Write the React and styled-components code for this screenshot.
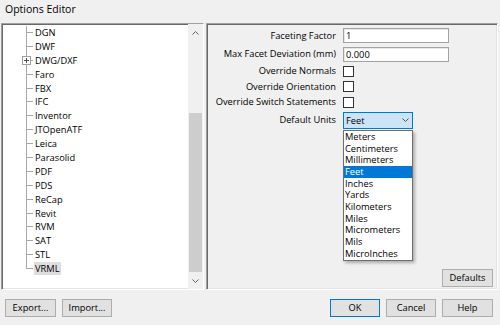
import React from 'react';
import styled, { createGlobalStyle } from 'styled-components';

const GlobalStyle = createGlobalStyle`
  html, body { margin: 0; padding: 0; background: #f0f0f0; }
  body {
    font-family: "Open Sans", "Noto Sans", "DejaVu Sans", sans-serif;
    font-size: 9.3px;
    color: #000;
  }
  * { box-sizing: border-box; }
`;

const Dialog = styled.div`
  width: 500px;
  height: 325px;
  display: flex;
  flex-direction: column;
  background: #f0f0f0;
  overflow: hidden;
`;

const TitleBar = styled.div`
  height: 23px;
  padding: 2px 0 0 5px;
  font-size: 10.5px;
  line-height: 14px;
`;

const Main = styled.div`
  height: 267px;
  display: flex;
  gap: 2px;
  padding-left: 1px;
`;

const Sunken = styled.div`
  border: 1px solid;
  border-color: #a0a0a0 #ffffff #ffffff #a0a0a0;
  box-shadow: inset 1px 1px 0 #696969, inset -1px -1px 0 #e3e3e3;
`;

const TreePanel = styled(Sunken)`
  width: 203px;
  background: #fff;
  display: flex;
`;

const TreeList = styled.div`
  flex: 1;
  padding-top: 1.5px;
  display: flex;
  flex-direction: column;
`;

const TreeRow = styled.div`
  height: 13.9px;
  display: flex;
  align-items: stretch;
`;

const Guide = styled.div`
  width: 7px;
  margin-left: 24px;
  flex-shrink: 0;
  position: relative;
  background:
    linear-gradient(#a8a8a8, #a8a8a8) no-repeat 0 0 / 1px ${(p) => (p.$last ? '50%' : '100%')},
    linear-gradient(#a8a8a8, #a8a8a8) no-repeat 0 50% / 100% 1px;
`;

const ExpandBox = styled.span`
  position: absolute;
  left: -4px;
  top: 50%;
  margin-top: -4px;
  width: 9px;
  height: 9px;
  border: 1px solid #a0a0a0;
  background: #fff;
  display: flex;
  align-items: center;
  justify-content: center;
`;

const Label = styled.span`
  margin-left: 1px;
  padding: 0 1px;
  line-height: 13px;
  align-self: center;
  background: ${(p) => (p.$selected ? '#dedede' : 'transparent')};
`;

const ScrollBar = styled.div`
  width: 15px;
  background: #f0f0f0;
  display: flex;
  flex-direction: column;
`;

const ScrollArrow = styled.div`
  height: 17px;
  display: flex;
  align-items: center;
  justify-content: center;
  padding-right: 1px;
`;

const ScrollTrack = styled.div`
  flex: 1;
  display: flex;
  flex-direction: column;
  padding: 0 1px 0 1px;
`;

const Thumb = styled.div`
  margin-top: ${(p) => p.$offset}px;
  height: ${(p) => p.$size}px;
  background: #cdcdcd;
`;

const RightPanel = styled(Sunken)`
  flex: 1;
  margin-right: 2px;
  display: flex;
  flex-direction: column;
  padding-top: 4px;
`;

const Form = styled.div`
  display: grid;
  grid-template-columns: 129px 1fr;
  grid-template-rows: 15px 15px 12px 12px 12px 17px;
  column-gap: 7px;
  row-gap: 3.6px;
  align-items: center;
`;

const FieldLabel = styled.div`
  text-align: right;
  white-space: nowrap;
  line-height: 12px;
`;

const TextInput = styled.div`
  width: 106px;
  height: 15px;
  background: #fff;
  border: 1px solid #a3a3a3;
  box-shadow: inset 1px 1px 0 #e8e8e8;
  padding-left: 2px;
  line-height: 13px;
`;

const CheckBox = styled.div`
  width: 11px;
  height: 11px;
  background: #fff;
  border: 1px solid #333;
`;

const ComboWrap = styled.div`
  position: relative;
  width: 70px;
  height: 17px;
`;

const Combo = styled.div`
  width: 70px;
  height: 17px;
  background: #cce4f7;
  border: 1px solid #0078d7;
  display: flex;
  align-items: center;
  justify-content: space-between;
  padding: 0 3px 0 2px;
  line-height: 15px;
`;

const DropList = styled.div`
  position: absolute;
  top: 18px;
  left: 0;
  width: 70px;
  background: #fff;
  border: 1px solid #6f6f6f;
  box-shadow: 2px 2px 3px rgba(0, 0, 0, 0.28);
  z-index: 2;
`;

const DropItem = styled.div`
  height: 11.7px;
  line-height: 11.7px;
  padding-left: 1px;
  white-space: nowrap;
  background: ${(p) => (p.$active ? '#0078d7' : 'transparent')};
  color: ${(p) => (p.$active ? '#fff' : '#000')};
`;

const PanelFooter = styled.div`
  margin-top: auto;
  display: flex;
  justify-content: flex-end;
  padding: 0 4px 2px 0;
`;

const Button = styled.div`
  width: ${(p) => p.$w || 50}px;
  height: 18px;
  background: #e1e1e1;
  border: 1px solid ${(p) => (p.$default ? '#0078d7' : '#adadad')};
  display: flex;
  align-items: center;
  justify-content: center;
  line-height: 16px;
`;

const Footer = styled.div`
  flex: 1;
  display: flex;
  align-items: flex-start;
  padding: 9px 7px 0 5px;
`;

const ButtonGroup = styled.div`
  display: flex;
  gap: ${(p) => p.$gap || 6}px;
`;

const Spacer = styled.div`
  flex: 1;
`;

const Chevron = ({ up, color = '#606060' }) => (
  <svg width="7" height="4" viewBox="0 0 7 4">
    <polyline
      points={up ? '0.5,3.5 3.5,0.5 6.5,3.5' : '0.5,0.5 3.5,3.5 6.5,0.5'}
      fill="none"
      stroke={color}
      strokeWidth="1"
    />
  </svg>
);

const Plus = () => (
  <svg width="7" height="7" viewBox="0 0 7 7">
    <path d="M1 3.5H6M3.5 1V6" stroke="#555" strokeWidth="1" />
  </svg>
);

const treeItems = [
  'DGN', 'DWF', 'DWG/DXF', 'Faro', 'FBX', 'IFC', 'Inventor', 'JTOpenATF', 'Leica',
  'Parasolid', 'PDF', 'PDS', 'ReCap', 'Revit', 'RVM', 'SAT', 'STL', 'VRML',
];

const units = [
  'Meters', 'Centimeters', 'Millimeters', 'Feet', 'Inches', 'Yards', 'Kilometers',
  'Miles', 'Micrometers', 'Mils', 'MicroInches',
];

export default function App() {
  return (
    <Dialog>
      <GlobalStyle />
      <TitleBar>Options Editor</TitleBar>
      <Main>
        <TreePanel>
          <TreeList>
            {treeItems.map((name, i) => (
              <TreeRow key={name}>
                <Guide $last={i === treeItems.length - 1}>
                  {name === 'DWG/DXF' && (
                    <ExpandBox>
                      <Plus />
                    </ExpandBox>
                  )}
                </Guide>
                <Label $selected={name === 'VRML'}>{name}</Label>
              </TreeRow>
            ))}
          </TreeList>
          <ScrollBar>
            <ScrollArrow>
              <Chevron up />
            </ScrollArrow>
            <ScrollTrack>
              <Thumb $offset={72} $size={159} />
            </ScrollTrack>
            <ScrollArrow>
              <Chevron />
            </ScrollArrow>
          </ScrollBar>
        </TreePanel>
        <RightPanel>
          <Form>
            <FieldLabel>Faceting Factor</FieldLabel>
            <TextInput>1</TextInput>
            <FieldLabel>Max Facet Deviation (mm)</FieldLabel>
            <TextInput>0.000</TextInput>
            <FieldLabel>Override Normals</FieldLabel>
            <CheckBox />
            <FieldLabel>Override Orientation</FieldLabel>
            <CheckBox />
            <FieldLabel>Override Switch Statements</FieldLabel>
            <CheckBox />
            <FieldLabel>Default Units</FieldLabel>
            <ComboWrap>
              <Combo>
                <span>Feet</span>
                <Chevron color="#555" />
              </Combo>
              <DropList>
                {units.map((u) => (
                  <DropItem key={u} $active={u === 'Feet'}>
                    {u}
                  </DropItem>
                ))}
              </DropList>
            </ComboWrap>
          </Form>
          <PanelFooter>
            <Button $w={51}>Defaults</Button>
          </PanelFooter>
        </RightPanel>
      </Main>
      <Footer>
        <ButtonGroup>
          <Button $w={51}>Export...</Button>
          <Button $w={50}>Import...</Button>
        </ButtonGroup>
        <Spacer />
        <ButtonGroup>
          <Button $default $w={50}>OK</Button>
          <Button $w={50}>Cancel</Button>
          <Button $w={51}>Help</Button>
        </ButtonGroup>
      </Footer>
    </Dialog>
  );
}
